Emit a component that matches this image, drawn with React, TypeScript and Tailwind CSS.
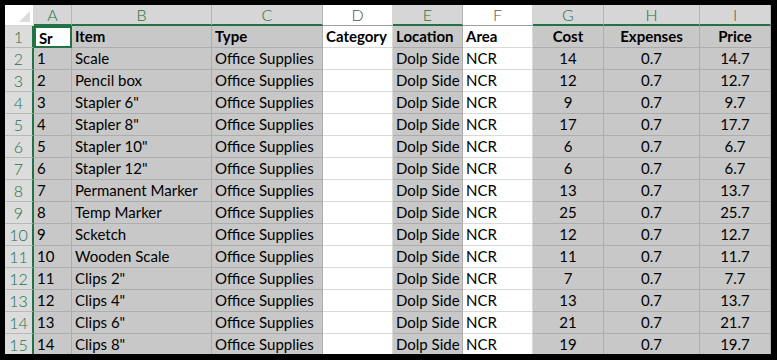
import React from "react";

const cols = [
  { key: "A", w: 38, sel: true, align: "left" },
  { key: "B", w: 140, sel: true, align: "left" },
  { key: "C", w: 111, sel: true, align: "left" },
  { key: "D", w: 70, sel: false, align: "left" },
  { key: "E", w: 70, sel: true, align: "left" },
  { key: "F", w: 70, sel: false, align: "left" },
  { key: "G", w: 71, sel: true, align: "center" },
  { key: "H", w: 96, sel: true, align: "center" },
  { key: "I", w: 71, sel: true, align: "center" },
];

const header = ["Sr", "Item", "Type", "Category", "Location", "Area", "Cost", "Expenses", "Price"];

const items: [string, number][] = [
  ["Scale", 14],
  ["Pencil box", 12],
  ['Stapler 6"', 9],
  ['Stapler 8"', 17],
  ['Stapler 10"', 6],
  ['Stapler 12"', 6],
  ["Permanent Marker", 13],
  ["Temp Marker", 25],
  ["Scketch", 12],
  ["Wooden Scale", 11],
  ['Clips 2"', 7],
  ['Clips 4"', 13],
  ['Clips 6"', 21],
  ['Clips 8"', 19],
];

const rows: string[][] = [
  header,
  ...items.map(([name, cost], i) => [
    String(i + 1),
    name,
    "Office Supplies",
    "",
    "Dolp Side",
    "NCR",
    String(cost),
    "0.7",
    String(Math.round((cost + 0.7) * 10) / 10),
  ]),
];

export default function App() {
  return (
    <div
      className="w-[777px] h-[360px] bg-black pt-[5px] pl-[5px] overflow-hidden"
      style={{ fontFamily: "Lato, 'Open Sans', sans-serif" }}
    >
      <div className="w-[766px] h-[349px] bg-white overflow-hidden">
        {/* header row */}
        <div className="flex h-[21px]">
          <div className="w-[29px] h-[21px] bg-white border-r border-b border-[#d4d4d4] relative shrink-0">
            <svg className="absolute right-[3px] bottom-[3px]" width="11" height="11" viewBox="0 0 11 11">
              <polygon points="11,0 11,11 0,11" fill="#dcdcdc" />
            </svg>
          </div>
          {cols.map((c) => (
            <div
              key={c.key}
              style={{ width: c.w }}
              className={
                c.sel
                  ? "shrink-0 h-[21px] bg-[#d6d6d6] border-r border-[#b5b5b5] border-b-2 border-b-[#217346] text-[#217346] text-[16px] font-light leading-[19px] text-center"
                  : "shrink-0 h-[21px] bg-white border-r border-[#d4d4d4] border-b border-b-[#9e9e9e] text-[#555] text-[16px] font-light leading-[20px] text-center"
              }
            >
              {c.key}
            </div>
          ))}
        </div>
        {rows.map((r, ri) => (
          <div key={ri} className="flex h-[22px]">
            <div className="w-[29px] h-[22px] shrink-0 bg-[#dcdcdc] border-r-2 border-r-[#217346] border-b border-b-[#b9b9b9] text-[#217346] text-[16px] font-light leading-[21px] text-center">
              {ri + 1}
            </div>
            {cols.map((c, ci) => {
              const active = ri === 0 && ci === 0;
              const bold = ri === 0;
              const base =
                "shrink-0 h-[22px] text-[15px] leading-[21px] whitespace-nowrap overflow-hidden px-[3px] text-black";
              let cls: string;
              if (active) {
                cls = base + " bg-white border-2 border-[#217346] leading-[18px] px-[2px]";
              } else if (c.sel) {
                cls = base + " bg-[#c8c8c8] border-r border-b border-[#adadad]";
              } else {
                cls = base + " bg-white border-r border-b border-[#d9d9d9]";
              }
              if (c.align === "center") cls += " text-center";
              if (bold) cls += " font-bold";
              return (
                <div key={c.key} style={{ width: c.w }} className={cls}>
                  {r[ci]}
                </div>
              );
            })}
          </div>
        ))}
      </div>
    </div>
  );
}
